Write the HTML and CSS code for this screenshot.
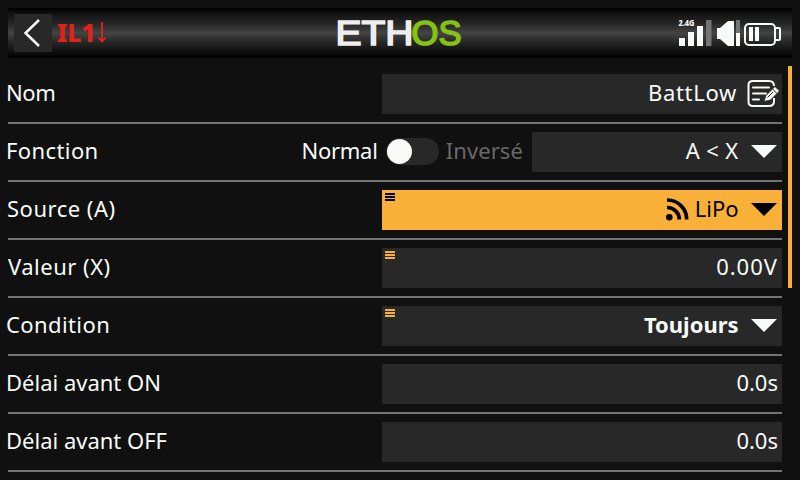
FILE: index.html
```html
<!DOCTYPE html>
<html lang="fr">
<head>
<meta charset="utf-8">
<title>ETHOS</title>
<link rel="stylesheet" href="styles.css">
</head>
<body>
<header class="topbar">
  <button class="back" aria-label="Retour"><svg width="38" height="38" viewBox="0 0 38 38"><path d="M25 6 L11.500 19 L25 32" fill="none" stroke="#f8fcf8" stroke-width="2.500"/></svg></button>
  <span class="title">IL1</span>
  <svg class="down" width="8" height="21" viewBox="0 0 8 21"><path d="M4 0V20M.5 15.500L4 19.500L7.500 15.500" fill="none" stroke="#e2231a" stroke-width="1.800"/></svg>
  <svg class="logo" width="130" height="50" viewBox="334 8 130 50">
    <text class="logo-text" x="335.500" y="45.200" textLength="78" lengthAdjust="spacingAndGlyphs" fill="#eeeeee" stroke="#eeeeee">ETH</text>
    <text class="logo-text" x="411.500" y="45.200" textLength="50" lengthAdjust="spacingAndGlyphs" fill="#84c214" stroke="#84c214">OS</text>
  </svg>
  <svg class="status" width="106" height="32" viewBox="676 16 106 32">
    <text class="band" x="678.500" y="26" textLength="16" lengthAdjust="spacingAndGlyphs">2.4G</text>
    <path d="M679 38h6v8h-6zM688 32h6v14h-6zM697 26h6v20h-6z" fill="#f8fcf8"/>
    <path d="M706 20h5.500v26h-5.500zM736 20h4v13h-4z" fill="#747474"/>
    <path d="M717 28h3l8-7h6v25h-6l-8-7h-3z" fill="#f8fcf8"/>
    <path d="M736 33h4v13h-4z" fill="#f8fcf8"/>
    <rect x="745" y="24" width="30" height="21" rx="4" fill="none" stroke="#f8fcf8" stroke-width="2"/>
    <path d="M776 28h3q1 0 1 1v10q0 1-1 1h-3" fill="none" stroke="#f8fcf8" stroke-width="2"/>
    <path d="M749 27h4v14h-4zM755 27h4v14h-4z" fill="#f8fcf8"/>
  </svg>
</header>
<main class="form">
  <div class="row"><span class="label nom">Nom</span><div class="field"><span class="value name">BattLow</span>
    <svg class="edit" width="34" height="30" viewBox="746 79 34 30"><path d="M774 86Q774 81 769 81H753Q748.500 81 748.500 85V102Q748.500 106 753 106H769Q774 106 774 101V98" fill="none" stroke="#f8fcf8" stroke-width="2"/><path d="M753 87.500H769M753 93.500H766M753 99.500H759" stroke="#f8fcf8" stroke-width="2" stroke-linecap="round"/><path d="M764 101.500L766 95.500L775 86.500L779.500 91L770.500 100Z" fill="#f8fcf8" stroke="#282828" stroke-width=".8"/><path d="M772.500 89L777 93.500M767.500 97.500L773 92" stroke="#282828" stroke-width="1"/></svg></div></div>
  <div class="row"><span class="label fonction">Fonction</span>
    <span class="normal">Normal</span><span class="switch"><span class="knob"></span></span><span class="inverse">Inversé</span>
    <div class="field short"><span class="value cmp">A &lt; X</span><svg class="arrow" width="26" height="13" viewBox="0 0 26 13"><path d="M0 0H26L13 13Z"/></svg></div></div>
  <div class="row"><span class="label source">Source (A)</span><div class="field focus"><svg class="menu" width="10" height="8" viewBox="0 0 10 8"><path d="M0 0h10v2H0zM0 3h10v2H0zM0 6h10v2H0z"/></svg>
    <svg class="feed" width="23" height="23" viewBox="0 0 23 23"><circle cx="3.300" cy="19.300" r="3.300"/><path d="M1 9.500A12 12 0 0 1 13.300 21.500M1 2A19.500 19.500 0 0 1 20.700 21.500" fill="none" stroke="#000" stroke-width="3.700"/></svg>
    <span class="value lipo">LiPo</span><svg class="arrow" width="26" height="13" viewBox="0 0 26 13"><path d="M0 0H26L13 13Z"/></svg></div></div>
  <div class="row"><span class="label valeur">Valeur (X)</span><div class="field"><svg class="menu" width="10" height="8" viewBox="0 0 10 8"><path d="M0 0h10v2H0zM0 3h10v2H0zM0 6h10v2H0z"/></svg><span class="value volts">0.00V</span></div></div>
  <div class="row"><span class="label condition">Condition</span><div class="field"><svg class="menu" width="10" height="8" viewBox="0 0 10 8"><path d="M0 0h10v2H0zM0 3h10v2H0zM0 6h10v2H0z"/></svg><span class="value always">Toujours</span><svg class="arrow" width="26" height="13" viewBox="0 0 26 13"><path d="M0 0H26L13 13Z"/></svg></div></div>
  <div class="row"><span class="label delay">Délai avant ON</span><div class="field"><span class="value secs">0.0s</span></div></div>
  <div class="row"><span class="label delay">Délai avant OFF</span><div class="field"><span class="value secs">0.0s</span></div></div>
</main>
<div class="scrollbar"></div>
</body>
</html>
```
FILE: styles.css
```css
* { box-sizing: border-box; }
body { margin: 0; width: 800px; height: 480px; overflow: hidden; background: #101010; color: #f8fcf8; font: 22px/30px "Noto Sans", sans-serif; position: relative; }
svg { display: block; flex: none; }
.topbar { height: 50px; margin: 8px 8px 0; display: flex; align-items: center; background: linear-gradient(#000 0%, #161616 15%, #242424 30%, #444 50%, #242424 70%, #121212 85%, #000 100%); }
.back { width: 38px; height: 38px; margin: 0 0 0 6px; padding: 0; border: 0; background: #282828; }
.title { width: 38px; margin-left: 5px; padding-bottom: 2px; color: #e2231a; font-weight: 800; font-size: 25px; line-height: 30px; letter-spacing: -.2px; }
.down { margin: 0 0 2px 3px; }
.logo { margin-left: 228px; }
.logo-text { font: 400 35px "Liberation Sans", sans-serif; stroke-width: 1.6px; }
.status { margin: 0 10px 2px auto; }
.band { font: 800 8px "Noto Sans", sans-serif; fill: #f8fcf8; }
.form { padding: 8px 18px 0 8px; }
.row { height: 58px; display: flex; align-items: center; border-bottom: 2px solid #747474; }
.label { flex: 1; margin-left: -2px; padding-bottom: 4px; white-space: nowrap; letter-spacing: .4px; }
.nom { letter-spacing: -.4px; }
.source { letter-spacing: .5px; margin-left: -1px; }
.valeur { letter-spacing: .5px; margin-left: 0; }
.delay { letter-spacing: 0; }
.field { width: 400px; height: 40px; background: #282828; display: flex; align-items: center; justify-content: flex-end; padding-right: 4px; position: relative; }
.short { width: 250px; }
.focus { background: #f8b038; color: #000; }
.value { white-space: nowrap; padding-bottom: 4px; }
.name { letter-spacing: .7px; margin-right: 9px; }
.edit { margin: 0 -2px 1px 0; }
.cmp { letter-spacing: .4px; }
.volts { letter-spacing: 1px; }
.arrow { margin: 0 1.400px 2px 12px; fill: currentColor; }
.menu { position: absolute; left: 3px; top: 3px; fill: #f8b038; }
.focus .menu { fill: #000; }
.feed { margin: 0 6px 2px 0; }
.always { font-weight: 700; }
.normal { letter-spacing: -.25px; margin-right: 8px; padding-bottom: 4px; }
.switch { width: 53px; height: 27px; margin-bottom: 1px; border-radius: 14px; background: #282828; padding: 1px; }
.knob { display: block; width: 25px; height: 25px; border-radius: 50%; background: #f8fcf8; }
.inverse { color: #686868; letter-spacing: .1px; margin: 0 9px 0 7px; padding-bottom: 4px; }
.scrollbar { position: absolute; left: 788px; top: 66px; width: 4px; height: 222px; background: #f8b038; }
```
